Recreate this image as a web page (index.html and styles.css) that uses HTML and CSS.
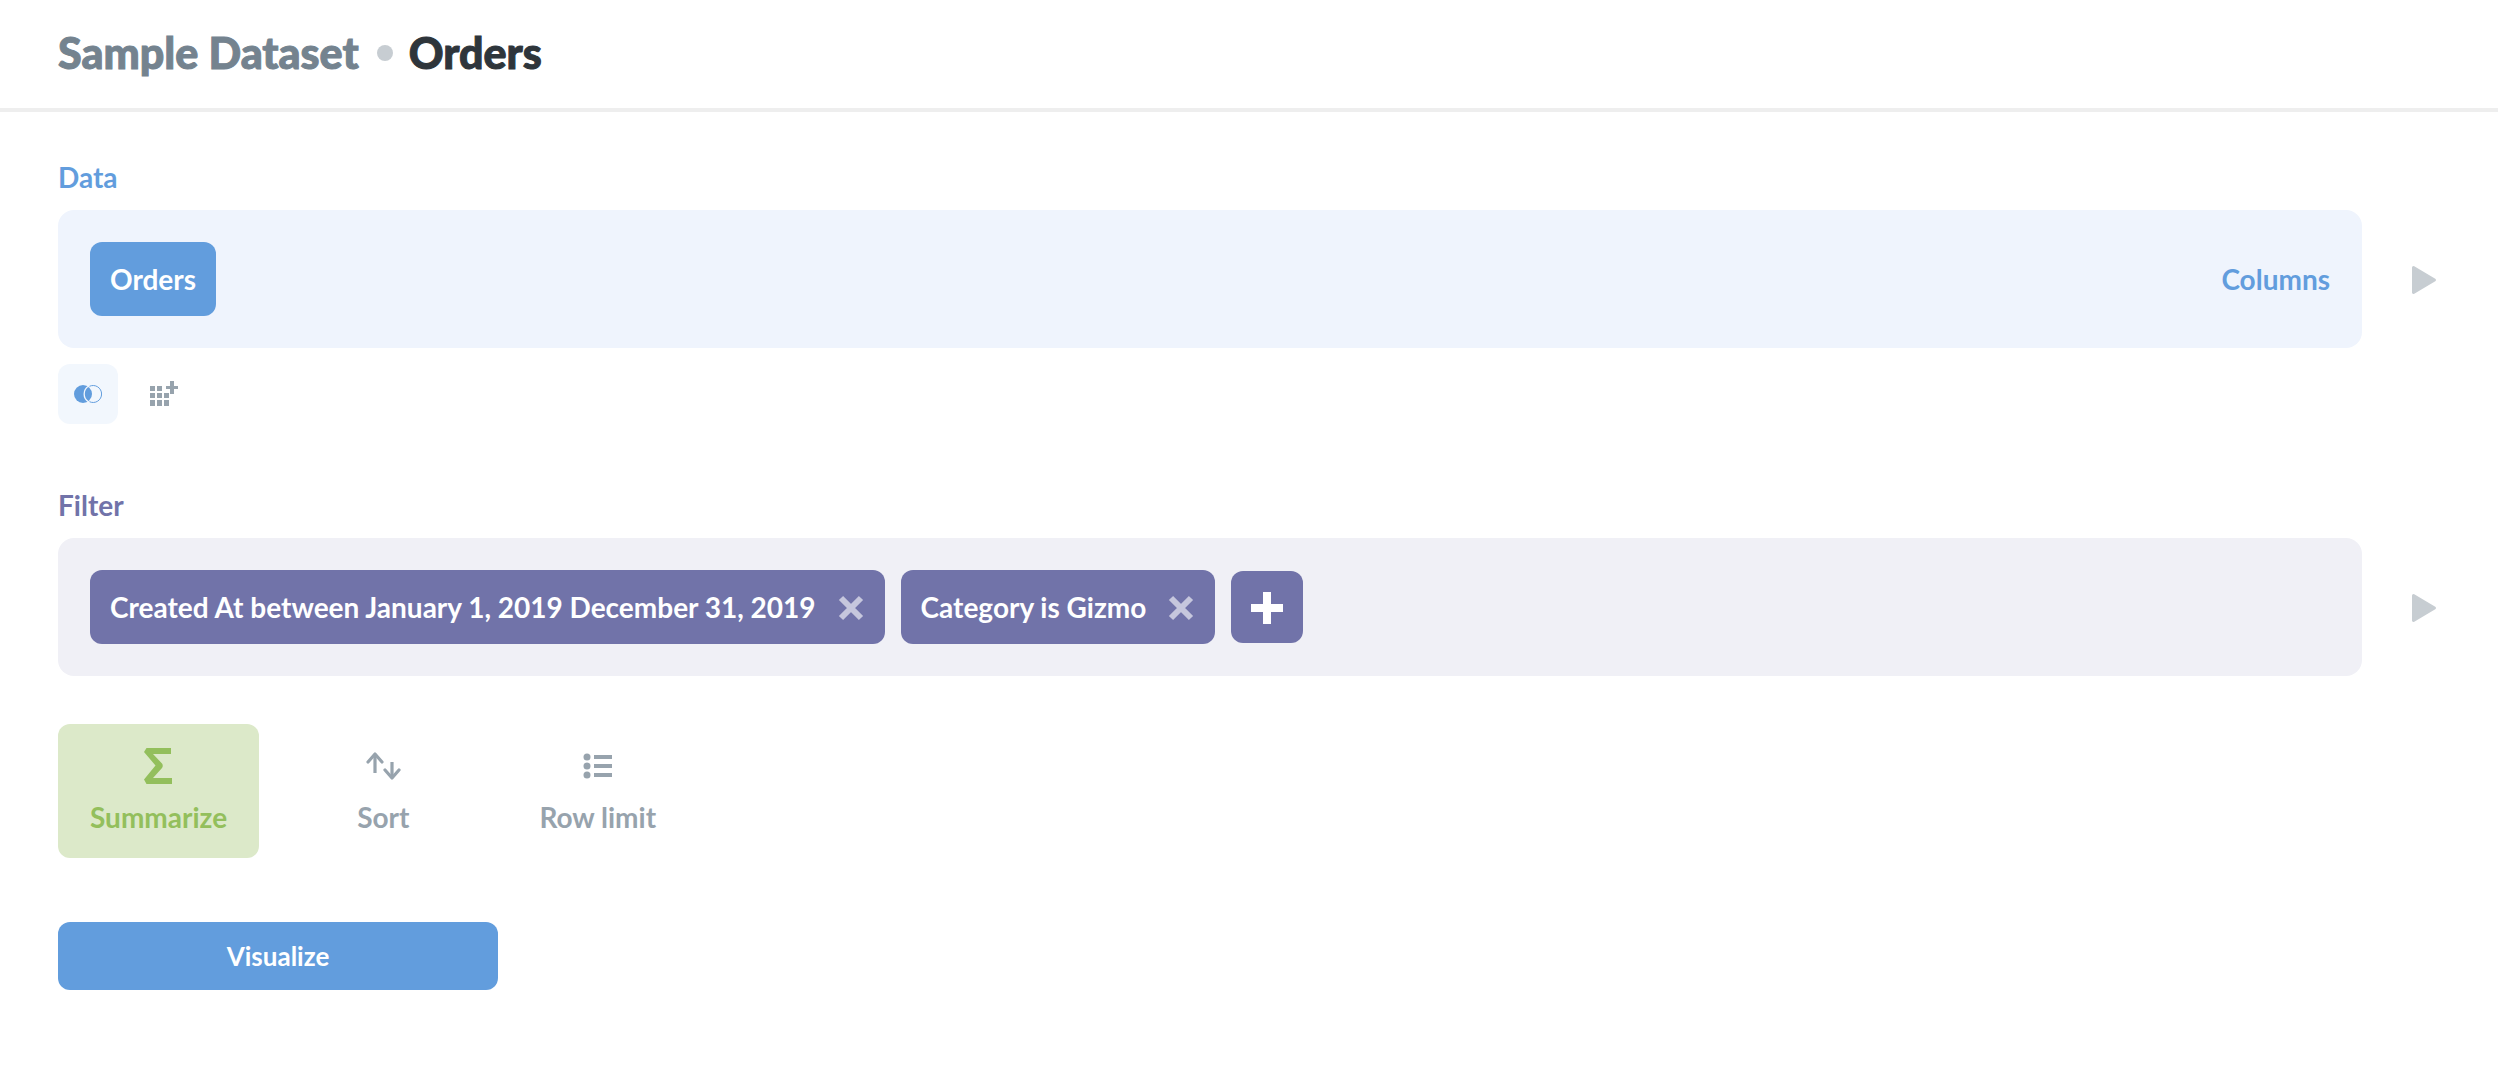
FILE: index.html
```
<!DOCTYPE html>
<html lang="en">
<head>
  <meta charset="UTF-8">
  <title>Orders</title>
  <link rel="stylesheet" href="styles.css">
</head>
<body>

<header class="header">
  <a class="crumb" href="#">Sample Dataset</a>
  <span class="dot"></span>
  <h1 class="title">Orders</h1>
</header>

<main class="notebook">

  <section class="step data">
    <h2 class="step-title">Data</h2>
    <div class="step-row">
      <div class="panel">
        <button class="chip">Orders</button>
        <button class="columns">Columns</button>
      </div>
      <button class="preview" aria-label="Preview data">
        <svg width="32" height="32" viewBox="0 0 32 32"><path d="M5.500 4.500L26.500 17L5.500 29.500Z" fill="currentColor" stroke="currentColor" stroke-width="3" stroke-linejoin="round"/></svg>
      </button>
    </div>
    <div class="small-actions">
      <button class="icon-btn join" aria-label="Join data">
        <svg width="28" height="18" viewBox="0 0 28 18">
          <circle cx="9" cy="9" r="9" fill="currentColor"/>
          <path d="M14.500 1.300A9 9 0 0 0 14.500 16.700" fill="none" stroke="#f2f7fd" stroke-width="1.300"/>
          <path d="M15.500 1.300A8.500 8.500 0 1 1 15.500 16.700" fill="none" stroke="currentColor"/>
        </svg>
      </button>
      <button class="icon-btn" aria-label="Custom column">
        <svg width="28" height="26" viewBox="0 0 28 26" fill="currentColor">
          <path d="M0 5h5v5H0zM7 5h5v5H7zM0 12h5v5H0zM7 12h5v5H7zM14 12h5v5h-5zM0 19h5v6H0zM7 19h5v6H7zM14 19h5v6h-5z"/>
          <path d="M20 0h4v5h4v3h-4v5h-4V8h-4V5h4z"/>
        </svg>
      </button>
    </div>
  </section>

  <section class="step filter">
    <h2 class="step-title">Filter</h2>
    <div class="step-row">
      <div class="panel">
        <div class="chip">
          Created At between January 1, 2019 December 31, 2019
          <button class="remove" aria-label="Remove date filter">
            <svg width="28" height="28" viewBox="0 0 28 28"><path d="M4 5L24 25M24 5L4 25" stroke="currentColor" stroke-width="6"/></svg>
          </button>
        </div>
        <div class="chip">
          Category is Gizmo
          <button class="remove" aria-label="Remove category filter">
            <svg width="28" height="28" viewBox="0 0 28 28"><path d="M4 5L24 25M24 5L4 25" stroke="currentColor" stroke-width="6"/></svg>
          </button>
        </div>
        <button class="chip add" aria-label="Add filter">
          <svg width="32" height="34" viewBox="0 0 32 34"><path d="M16 2V34M0 18H32" stroke="currentColor" stroke-width="8"/></svg>
        </button>
      </div>
      <button class="preview" aria-label="Preview filter">
        <svg width="32" height="32" viewBox="0 0 32 32"><path d="M5.500 4.500L26.500 17L5.500 29.500Z" fill="currentColor" stroke="currentColor" stroke-width="3" stroke-linejoin="round"/></svg>
      </button>
    </div>
  </section>

  <div class="actions">
    <button class="action summarize">
      <svg width="36" height="36" viewBox="0 0 36 36"><path d="M30 0H5.500L3 4L14.500 17.500L3 31.500L5.500 36H31V30H12L21 20Q22.500 17.500 21 15.500L12 6H30Z" fill="currentColor"/></svg>
      Summarize
    </button>
    <button class="action">
      <svg width="36" height="36" viewBox="0 0 36 36" fill="none" stroke="currentColor" stroke-width="3.200"><path d="M10 25V6M27 14V30"/><path d="M3 14L10 6L17 14M20 22L27 30L34 22" stroke-linecap="round" stroke-linejoin="round"/></svg>
      Sort
    </button>
    <button class="action">
      <svg width="36" height="36" viewBox="0 0 36 36" fill="currentColor"><circle cx="7" cy="9" r="3.500"/><circle cx="7" cy="18" r="3.500"/><circle cx="7" cy="27" r="3.500"/><path d="M14 7h18v4H14zM14 16h18v4H14zM14 25h18v4H14z"/></svg>
      Row limit
    </button>
  </div>

  <button class="visualize">Visualize</button>

</main>

</body>
</html>
```
FILE: styles.css
```
* {
  box-sizing: border-box;
}

body {
  margin: 0;
  background: #fff;
  font-family: Lato, sans-serif;
  font-size: 28px;
  font-weight: 700;
  line-height: 34px;
}

button {
  display: flex;
  align-items: center;
  padding: 0;
  border: none;
  background: none;
  color: inherit;
  font: inherit;
  cursor: pointer;
}

svg {
  display: block;
}

.header {
  display: flex;
  align-items: center;
  height: 112px;
  padding: 0 58px 2px;
  border-bottom: 4px solid #eeeeee;
  font-size: 43px;
  font-weight: 900;
  line-height: 50px;
  -webkit-text-stroke: 1px;
}

.crumb {
  color: #74838f;
  text-decoration: none;
}

.dot {
  width: 16px;
  height: 16px;
  margin: 0 16px 0 18px;
  border-radius: 50%;
  background: #c7cdd2;
}

.title {
  margin: 0;
  color: #2e353b;
  font-size: inherit;
  font-weight: inherit;
}

.notebook {
  padding: 48px 58px;
}

.step-title {
  margin: 0 0 16px;
  font-size: inherit;
}

.data {
  margin-bottom: 64px;
  color: #629ddd;
}

.filter {
  margin-bottom: 48px;
  color: #7173a9;
}

.step-row {
  display: flex;
  align-items: center;
  gap: 46px;
}

.panel {
  flex: 1;
  display: flex;
  align-items: center;
  gap: 16px;
  padding: 32px;
  border-radius: 16px;
  background: #eff4fd;
}

.filter .panel {
  background: #f0f0f6;
}

.chip {
  display: flex;
  align-items: center;
  gap: 21px;
  padding: 20px;
  border-radius: 12px;
  background: #629ddd;
  color: #fff;
}

.filter .chip {
  background: #7173a9;
}

.filter .add {
  height: 72px;
}

.columns {
  margin-left: auto;
}

.remove {
  color: #c6c7dd;
}

.preview {
  color: #c7cdd2;
}

.small-actions {
  display: flex;
  gap: 16px;
  margin-top: 16px;
}

.icon-btn {
  justify-content: center;
  width: 60px;
  height: 60px;
  border-radius: 12px;
  color: #97a3ad;
}

.join {
  background: #f2f7fd;
  color: #629ddd;
}

.actions {
  display: flex;
  gap: 66px;
  margin-bottom: 64px;
}

.action {
  flex-direction: column;
  gap: 16px;
  padding: 24px 32px;
  border-radius: 12px;
  color: #97a3ad;
}

.summarize {
  background: #dce9c9;
  color: #93bf5c;
}

.visualize {
  justify-content: center;
  width: 440px;
  height: 68px;
  border-radius: 12px;
  background: #629ddd;
  color: #fff;
  font-size: 26px;
}
```
